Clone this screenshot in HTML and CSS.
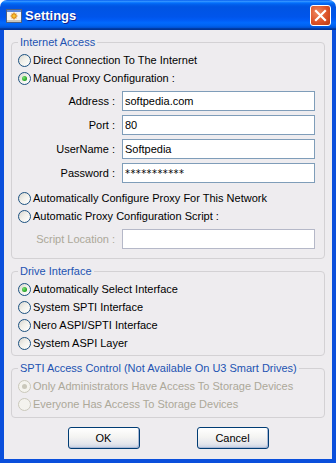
FILE: index.html
```html
<!DOCTYPE html>
<html lang="en">
<head>
    <meta charset="UTF-8">
    <title>Settings</title>
    <link rel="stylesheet" href="styles.css">
</head>
<body>
<div class="window">
    <div class="titlebar">
        <svg class="app-icon" viewBox="0 0 16 14" width="16" height="14">
            <rect x="0.5" y="0.5" width="15" height="13" fill="#f6f5f0" stroke="#4d5f80"/>
            <rect x="1" y="1" width="14" height="2" fill="#5b86d8"/>
            <rect x="1" y="11" width="14" height="2" fill="#c9c6bd"/>
            <path d="M8 3.5 L8 10.5 M4.5 7 L11.5 7 M5.6 4.6 L10.4 9.4 M10.4 4.6 L5.6 9.4" stroke="#e08a12" stroke-width="1.2"/>
            <circle cx="8" cy="7" r="2.2" fill="#f7c531" stroke="#d07a10" stroke-width="0.8"/>
        </svg>
        <span class="title">Settings</span>
        <div class="close">
            <svg viewBox="0 0 19 19" width="19" height="19">
                <path d="M5 5 L14 14 M14 5 L5 14" stroke="#fff" stroke-width="2.2" stroke-linecap="square"/>
            </svg>
        </div>
    </div>

    <div class="frame">
        <div class="client">
            <fieldset class="group">
                <legend>Internet Access</legend>
                <div class="radio"><span class="mark"></span>Direct Connection To The Internet</div>
                <div class="radio"><span class="mark checked"></span>Manual Proxy Configuration :</div>
                <div class="field">
                    <span class="field-label">Address :</span>
                    <input class="text" type="text" value="softpedia.com">
                </div>
                <div class="field">
                    <span class="field-label">Port :</span>
                    <input class="text" type="text" value="80">
                </div>
                <div class="field">
                    <span class="field-label">UserName :</span>
                    <input class="text" type="text" value="Softpedia">
                </div>
                <div class="field">
                    <span class="field-label">Password :</span>
                    <input class="text pass" type="text" value="***********">
                </div>
                <div class="radio after-fields"><span class="mark"></span>Automatically Configure Proxy For This Network</div>
                <div class="radio"><span class="mark"></span>Automatic Proxy Configuration Script :</div>
                <div class="field">
                    <span class="field-label disabled">Script Location :</span>
                    <input class="text off" type="text" value="" disabled>
                </div>
            </fieldset>

            <fieldset class="group drive">
                <legend>Drive Interface</legend>
                <div class="radio"><span class="mark checked"></span>Automatically Select Interface</div>
                <div class="radio"><span class="mark"></span>System SPTI Interface</div>
                <div class="radio"><span class="mark"></span>Nero ASPI/SPTI Interface</div>
                <div class="radio"><span class="mark"></span>System ASPI Layer</div>
            </fieldset>

            <fieldset class="group access">
                <legend>SPTI Access Control (Not Available On U3 Smart Drives)</legend>
                <div class="radio disabled"><span class="mark checked"></span>Only Administrators Have Access To Storage Devices</div>
                <div class="radio disabled"><span class="mark"></span>Everyone Has Access To Storage Devices</div>
            </fieldset>

            <div class="buttons">
                <button class="btn" type="button">OK</button>
                <button class="btn" type="button">Cancel</button>
            </div>
        </div>
    </div>
</div>
</body>
</html>
```

FILE: styles.css
```css
body {
    margin: 0;
    background: #fff;
    font-family: "Liberation Sans", Arial, sans-serif;
    font-size: 11px;
    color: #000;
}

.window {
    width: 336px;
    height: 463px;
    display: flex;
    flex-direction: column;
}

/* title bar */
.titlebar {
    height: 30px;
    flex: none;
    display: flex;
    align-items: center;
    padding: 0 5px 0 6px;
    border-radius: 7px 7px 0 0;
    background: linear-gradient(#0058ee 0%, #3593ff 4%, #288eff 6%, #127dff 8%, #036ffc 10%, #0262ee 14%, #0057e5 20%, #0054e3 24%, #0055eb 56%, #005bf5 66%, #026afe 76%, #0062ef 86%, #0052d6 92%, #0040ab 94%, #003092 100%);
}

.app-icon {
    margin-right: 3px;
    margin-top: 1px;
}

.title {
    flex: 1;
    color: #fff;
    font-weight: bold;
    font-size: 13px;
    text-shadow: 1px 1px 0 #0f1c8a;
}

.close {
    width: 21px;
    height: 21px;
    box-sizing: border-box;
    border: 1px solid #fff;
    border-radius: 3px;
    background: radial-gradient(circle at 35% 35%, #f08a62, #dc5228 55%, #b83a12);
}

.close svg {
    display: block;
}

/* window frame + client */
.frame {
    flex: 1;
    display: flex;
    border: solid #0a4fdc;
    border-width: 0 4px 4px;
    box-shadow: inset 1px 0 #0831a8, inset -1px 0 #0831a8, inset 0 -1px #0831a8;
}

.client {
    flex: 1;
    background: #eeecef;
    padding: 5px 7px 0 7px;
}

/* group boxes */
.group {
    margin: 0;
    padding: 2px 0 9px 0;
    border: 1px solid #d3d1d4;
    border-radius: 4px;
    min-width: 0;
}

.group legend {
    margin-left: 6px;
    padding: 0 2px;
    line-height: 14px;
    color: #2253b2;
}

.group.drive {
    margin-top: 5px;
    padding-bottom: 3px;
}

.group.access {
    margin-top: 5px;
    padding-bottom: 4px;
}

/* radio rows */
.radio {
    display: flex;
    align-items: center;
    height: 18px;
    padding-left: 6px;
}

.radio.after-fields {
    margin-top: 6px;
}

.mark {
    width: 13px;
    height: 13px;
    box-sizing: border-box;
    border: 1px solid #1c5180;
    border-radius: 50%;
    margin-right: 2px;
    background: linear-gradient(135deg, #d6d5cf 0%, #f1f0ea 45%, #ffffff 100%);
    display: flex;
    align-items: center;
    justify-content: center;
}

.mark.checked::after {
    content: "";
    width: 5px;
    height: 5px;
    border-radius: 50%;
    background: radial-gradient(circle at 35% 35%, #7ae073, #21a121 70%, #138a13);
}

.radio.disabled {
    color: #aca899;
}

.radio.disabled .mark {
    border-color: #cac8bb;
    background: #f4f3ee;
}

.radio.disabled .mark.checked::after {
    background: #cac8bb;
}

/* text fields */
.field {
    display: flex;
    align-items: center;
    height: 20px;
    margin-top: 4px;
}

.field-label {
    width: 103px;
    text-align: right;
    margin-right: 7px;
}

.field-label.disabled {
    color: #aca899;
}

.text {
    width: 193px;
    height: 20px;
    box-sizing: border-box;
    margin: 0;
    border: 1px solid #7f9db9;
    padding: 0 2px;
    background: #fff;
    font-family: "Liberation Sans", Arial, sans-serif;
    font-size: 11px;
    color: #000;
    outline: none;
}

.text.pass {
    font-family: "DejaVu Sans", sans-serif;
    font-size: 10px;
    letter-spacing: 0.4px;
}

.text.off {
    border-color: #b5b8c8;
}

/* buttons */
.buttons {
    display: flex;
    justify-content: center;
    gap: 57px;
    margin-top: 9px;
}

.btn {
    width: 72px;
    height: 22px;
    box-sizing: border-box;
    border: 1px solid #003c74;
    border-radius: 3px;
    background: linear-gradient(#ffffff 0%, #f4f4f2 45%, #e3e5ec 80%, #c5cfe2 100%);
    box-shadow: inset -1px -1px 0 #a9b8d6;
    font-family: "Liberation Sans", Arial, sans-serif;
    font-size: 11px;
    color: #000;
    padding: 0;
}
```
